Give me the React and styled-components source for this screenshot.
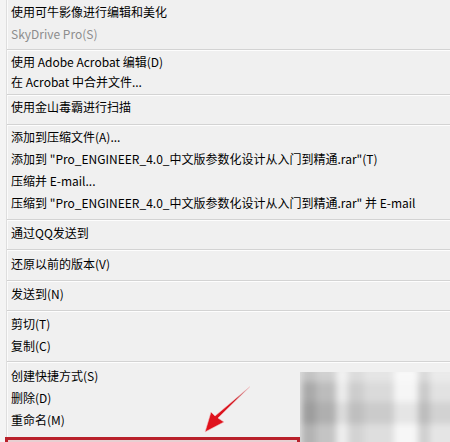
import styled, { createGlobalStyle } from "styled-components"

const GlobalStyle = createGlobalStyle`
  html, body {
    margin: 0;
    padding: 0;
    background: #f0f0f0;
    overflow: hidden;
  }
`

const menuItems = [
    { label: '使用可牛影像进行编辑和美化', top: 1 },
    { label: 'SkyDrive Pro(S)', disabled: true },
    { sep: true, above: 4, below: 0 },
    { label: '使用 Adobe Acrobat 编辑(D)', h: 21 },
    { label: '在 Acrobat 中合并文件...', h: 20 },
    { sep: true, above: 2, below: 0 },
    { label: '使用金山毒霸进行扫描' },
    { sep: true, above: 6, below: 0 },
    { label: '添加到压缩文件(A)...' },
    { label: '添加到 "Pro_ENGINEER_4.0_中文版参数化设计从入门到精通.rar"(T)' },
    { label: '压缩并 E-mail...' },
    { label: '压缩到 "Pro_ENGINEER_4.0_中文版参数化设计从入门到精通.rar" 并 E-mail' },
    { sep: true, above: 5, below: 1 },
    { label: '通过QQ发送到' },
    { sep: true, above: 5, below: 2 },
    { label: '还原以前的版本(V)' },
    { sep: true, above: 5, below: 1 },
    { label: '发送到(N)' },
    { sep: true, above: 5, below: 1 },
    { label: '剪切(T)' },
    { label: '复制(C)' },
    { sep: true, above: 4, below: 2 },
    { label: '创建快捷方式(S)' },
    { label: '删除(D)' },
    { label: '重命名(M)' },
]

const Menu = styled.div`
    position: relative;
    width: 450px;
    height: 442px;
    overflow: hidden;
    display: flex;
    flex-direction: column;
    background: linear-gradient(to right, #f4f4f4 0 6px, #dedede 6px 7px, #fbfbfb 7px 8px, #f0f0f0 8px);
    font-family: "Noto Sans CJK SC", "Microsoft YaHei", sans-serif;
    font-size: 12px;
    color: #000;
`

const Item = styled.div`
    flex: none;
    height: ${p => p.$h || 22}px;
    line-height: ${p => p.$h || 22}px;
    margin-top: ${p => p.$top || 0}px;
    padding-left: 11px;
    white-space: nowrap;
    color: ${p => p.$disabled ? '#8d8d8d' : '#000'};
`

const Separator = styled.div`
    flex: none;
    margin: ${p => p.$above}px 0 ${p => p.$below}px 7px;
    height: 0;
    border-top: 1px solid #d3d3d3;
    border-bottom: 1px solid #fdfdfd;
`

const Highlighted = styled.div`
    flex: none;
    margin: 6px 0 0 5px;
    width: 289px;
    height: 22px;
    border: 3px solid #b9212b;
    background: #e8cfd2;
`

const Mosaic = styled.div`
    position: absolute;
    left: 300px;
    top: 372px;
    width: 150px;
    height: 70px;
    overflow: hidden;
    background: #e0e0e0;
`

const MosaicBlur = styled.div`
    position: absolute;
    inset: -4px -8px -8px 2px;
    filter: blur(3px);
    background:
        linear-gradient(to bottom,
            rgba(255,255,255,0.3) 0 14px, rgba(255,255,255,0) 14px 34px,
            rgba(0,0,0,0.07) 34px 56px, rgba(255,255,255,0.12) 56px 82px),
        linear-gradient(to right,
            #a9a9a9 0 14px, #bcbcbc 14px 34px, #ececec 34px 46px, #cdcdcd 46px 62px,
            #dadada 62px 92px, #f6f6f6 92px 116px, #cacaca 116px 128px, #e2e2e2 128px 160px);
`

const Arrow = styled.svg`
    position: absolute;
    left: 198px;
    top: 380px;
    width: 60px;
    height: 58px;
    overflow: visible;
`

const App = () => {
    return (
        <Menu>
            <GlobalStyle />
            {menuItems.map((m, i) => m.sep
                ? <Separator key={i} $above={m.above} $below={m.below} />
                : <Item key={i} $h={m.h} $top={m.top} $disabled={m.disabled}>{m.label}</Item>
            )}
            <Highlighted />
            <Mosaic>
                <MosaicBlur />
            </Mosaic>
            <Arrow viewBox="198 380 60 58">
                <defs>
                    <linearGradient id="arrowRed" x1="0" y1="1" x2="1" y2="0">
                        <stop offset="0" stopColor="#e3101b" />
                        <stop offset="0.6" stopColor="#d81620" />
                        <stop offset="1" stopColor="#a21e24" />
                    </linearGradient>
                </defs>
                <path
                    d="M250 386.5 L218 418 L224 422 L205 432 L211 412 L215 416 Z"
                    fill="url(#arrowRed)"
                    stroke="#f3c7c9"
                    strokeWidth="0.6"
                />
            </Arrow>
        </Menu>
    )
}

export default App
